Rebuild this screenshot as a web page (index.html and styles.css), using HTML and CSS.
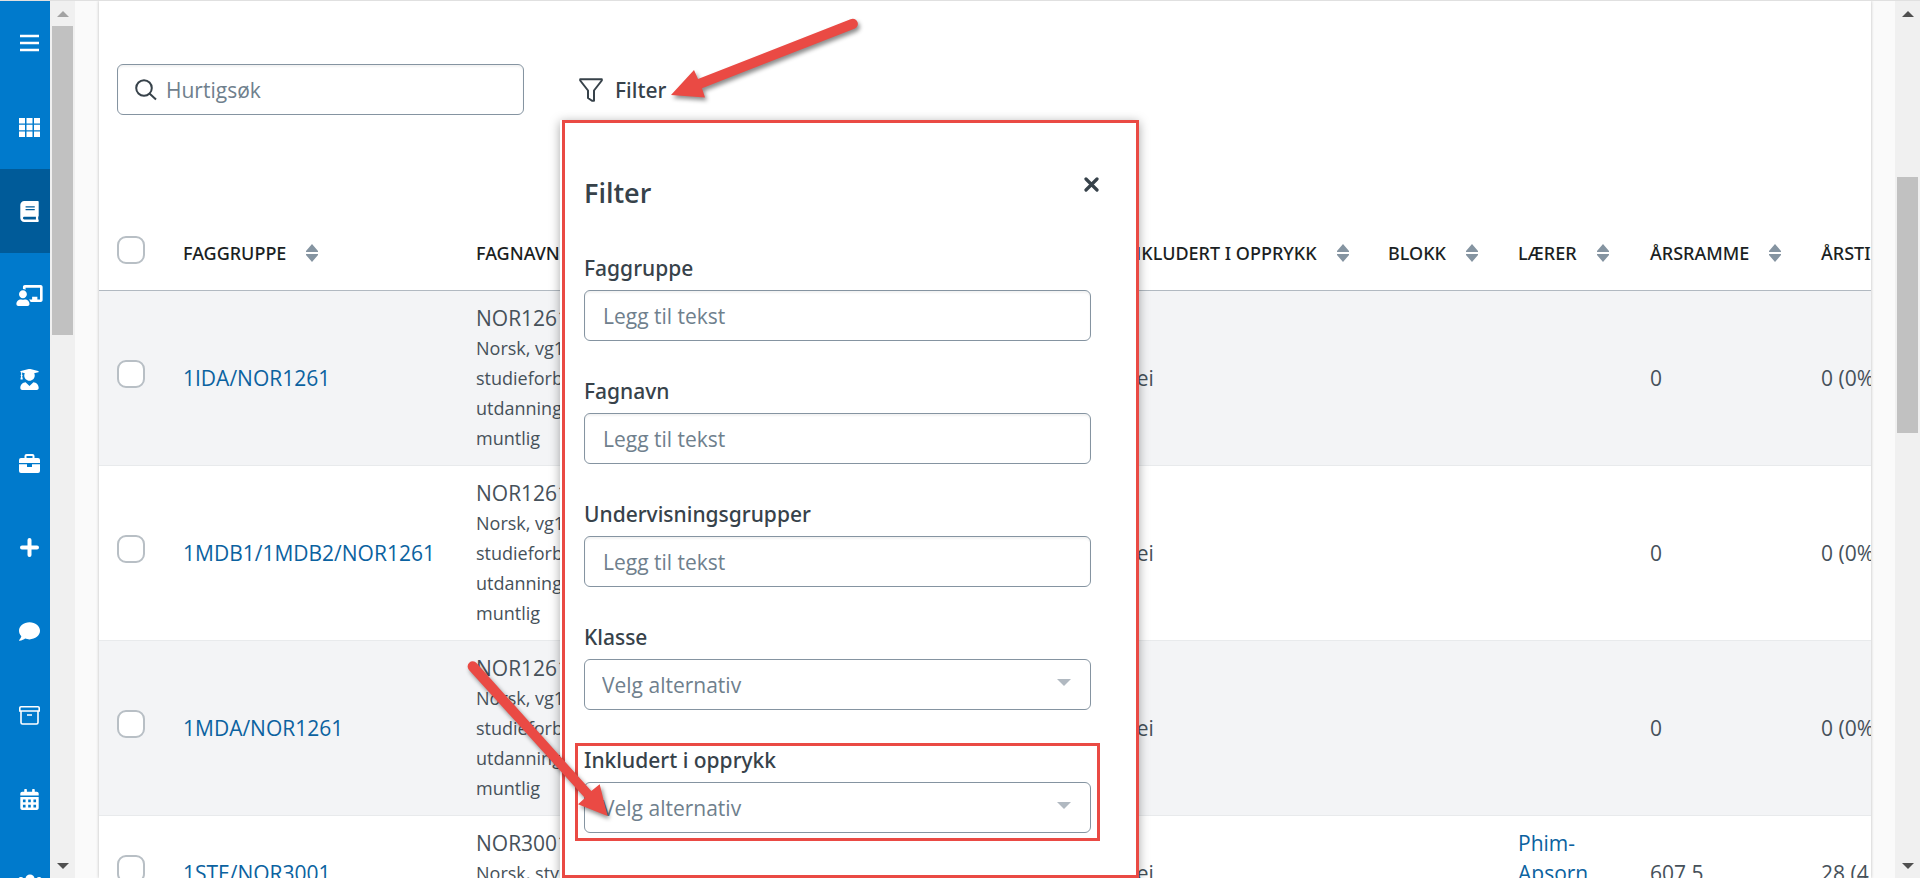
FILE: index.html
```html
<!DOCTYPE html>
<html lang="no">
<head>
<meta charset="utf-8">
<title>Faggrupper</title>
<link rel="stylesheet" href="styles.css">
</head>
<body>
<svg class="defs" aria-hidden="true">
  <symbol id="sort" viewBox="0 0 12 18"><path d="M6 0l6 7v1H0V7zM0 10h12v1l-6 7-6-7z" fill="#8594a1"/></symbol>
  <symbol id="up" viewBox="0 0 12 6"><path d="M6 0l6 6H0z" fill="currentColor"/></symbol>
  <symbol id="down" viewBox="0 0 12 6"><path d="M0 0h12L6 6z" fill="currentColor"/></symbol>
</svg>
<div class="page">
  <nav class="sidebar" aria-label="Hovedmeny">
    <a href="#" aria-label="Meny"><svg width="21" height="20" viewBox="0 0 21 20"><path d="M1 3h19M1 10h19M1 17h19" stroke="#fff" stroke-width="2.400"/></svg></a>
    <a href="#" aria-label="Oversikt"><svg width="21" height="19" viewBox="0 0 21 19"><path d="M0 0h6v5.500H0zM7.500 0h6v5.500h-6zM15 0h6v5.500h-6zM0 6.800h6v5.500H0zM7.500 6.800h6v5.500h-6zM15 6.800h6v5.500h-6zM0 13.500h6V19H0zM7.500 13.500h6V19h-6zM15 13.500h6V19h-6z"/></svg></a>
    <a href="#" class="active" aria-label="Fag"><svg width="19" height="21" viewBox="0 0 448 512"><path d="M448 360V24c0-13.300-10.700-24-24-24H96C43 0 0 43 0 96v320c0 53 43 96 96 96h328c13.300 0 24-10.700 24-24v-16c0-7.500-3.500-14.300-8.900-18.700-4.200-15.400-4.200-59.300 0-74.700 5.400-4.300 8.900-11.100 8.900-18.600zM128 134c0-3.300 2.700-6 6-6h212c3.300 0 6 2.700 6 6v20c0 3.300-2.700 6-6 6H134c-3.300 0-6-2.700-6-6v-20zm0 64c0-3.300 2.700-6 6-6h212c3.300 0 6 2.700 6 6v20c0 3.300-2.700 6-6 6H134c-3.300 0-6-2.700-6-6v-20zm253.400 250H96c-17.700 0-32-14.300-32-32 0-17.600 14.400-32 32-32h285.400c-1.900 17.100-1.900 46.900 0 64z"/></svg></a>
    <a href="#" aria-label="Undervisning"><svg width="27" height="21" viewBox="0 0 640 512"><path d="M208 352c-2.390 0-4.780.35-7.060 1.090C187.980 357.300 174.350 360 160 360c-14.350 0-27.980-2.700-40.950-6.910-2.280-.74-4.660-1.090-7.050-1.090C49.940 352-.33 402.480 0 464.620.14 490.880 21.730 512 48 512h224c26.270 0 47.860-21.120 48-47.380.33-62.140-49.940-112.620-112-112.620zm-48-32c53.020 0 96-42.980 96-96s-42.980-96-96-96-96 42.980-96 96 42.980 96 96 96zM592 0H208c-26.470 0-48 22.250-48 49.590V96c23.420 0 45.100 6.780 64 17.800V64h352v288h-64v-64H384v64h-76.240c19.100 16.690 33.120 38.730 39.690 64H592c26.470 0 48-22.250 48-49.590V49.590C640 22.250 618.470 0 592 0z"/></svg></a>
    <a href="#" aria-label="Elever"><svg width="19" height="21" viewBox="0 0 448 512"><path d="M319.400 320.600L224 416l-95.400-95.400C57.100 323.700 0 382.200 0 454.400v9.600c0 26.500 21.500 48 48 48h352c26.500 0 48-21.500 48-48v-9.600c0-72.200-57.100-130.700-128.600-133.800zM13.600 79.800l6.400 1.500v58.400c-7 4.200-12 11.500-12 20.300 0 8.400 4.600 15.400 11.100 19.700L3.500 242c-1.700 6.900 2.100 14 7.600 14h41.800c5.500 0 9.300-7.100 7.600-14l-15.600-62.300C51.400 175.400 56 168.400 56 160c0-8.800-5-16.100-12-20.300V87.100l66 15.900c-8.600 17.200-14 36.400-14 57 0 70.700 57.300 128 128 128s128-57.300 128-128c0-20.600-5.300-39.800-14-57l96.300-23.200c18.200-4.400 18.200-27.100 0-31.500l-190.400-46c-13-3.100-26.700-3.100-39.700 0L13.600 48.200c-18.100 4.400-18.100 27.200 0 31.600z"/></svg></a>
    <a href="#" aria-label="Ansatte"><svg width="21" height="19" viewBox="0 0 21 19"><path fill-rule="evenodd" d="M5.500 4V2a2 2 0 0 1 2-2h6a2 2 0 0 1 2 2v2H19a2 2 0 0 1 2 2v3H0V6a2 2 0 0 1 2-2zM7.500 4h6V2h-6zM0 10.300h8V13h5v-2.700h8V17a2 2 0 0 1-2 2H2a2 2 0 0 1-2-2z"/></svg></a>
    <a href="#" aria-label="Legg til"><svg width="19" height="19" viewBox="0 0 19 19"><path d="M9.500 2v15M2 9.500h15" stroke="#fff" stroke-width="4" stroke-linecap="round"/></svg></a>
    <a href="#" aria-label="Meldinger"><svg width="21" height="21" viewBox="0 0 512 512"><path d="M256 32C114.600 32 0 125.100 0 240c0 49.600 21.400 95 57 130.700C44.500 421.100 2.700 466 2.200 466.500c-2.200 2.300-2.800 5.700-1.500 8.700S4.800 480 8 480c66.300 0 116-31.800 140.600-51.400 32.700 12.300 69 19.400 107.400 19.400 141.400 0 256-93.100 256-208S397.400 32 256 32z"/></svg></a>
    <a href="#" aria-label="Arkiv"><svg width="21" height="19" viewBox="0 0 21 19"><path d="M2 .8h17a1.200 1.200 0 0 1 1.200 1.200v3H.8V2A1.200 1.200 0 0 1 2 .8zM2 5v11.500A1.500 1.500 0 0 0 3.500 18h14a1.500 1.500 0 0 0 1.500-1.500V5M8 9h5" fill="none" stroke="#fff" stroke-width="1.600"/></svg></a>
    <a href="#" aria-label="Kalender"><svg width="19" height="21" viewBox="0 0 448 512"><path fill-rule="evenodd" d="M0 464c0 26.500 21.500 48 48 48h352c26.500 0 48-21.500 48-48V192H0zM64 256h64v64H64zM192 256h64v64h-64zM320 256h64v64h-64zM64 384h64v64H64zM192 384h64v64h-64zM320 384h64v64h-64zM400 64h-48V16c0-8.800-7.200-16-16-16h-32c-8.800 0-16 7.200-16 16v48H160V16c0-8.800-7.200-16-16-16h-32c-8.800 0-16 7.200-16 16v48H48C21.500 64 0 85.500 0 112v48h448v-48c0-26.500-21.500-48-48-48z"/></svg></a>
    <a href="#" aria-label="Grupper"><svg width="26" height="21" viewBox="0 0 640 512"><path d="M96 224a64 64 0 1 0 0-128 64 64 0 0 0 0 128zm448 0a64 64 0 1 0 0-128 64 64 0 0 0 0 128zM320 256a112 112 0 1 0 0-224 112 112 0 0 0 0 224zM128 432c0-80 50-144 115-144h154c65 0 115 64 115 144v48H128z"/></svg></a>
  </nav>
  <div class="scrollbar side-scroll" aria-hidden="true">
    <svg class="faded" width="12" height="6"><use href="#up"/></svg><div class="track"><div class="thumb"></div></div><svg width="12" height="6"><use href="#down"/></svg>
  </div>

  <main class="content">
    <section class="card">
      <div class="toolbar">
        <label class="search">
          <svg width="22" height="22" viewBox="0 0 22 22" fill="none" stroke="#37424a" stroke-width="2"><circle cx="9" cy="9" r="7.800"/><path d="M14.500 14.500l6.500 6"/></svg>
          <input type="text" placeholder="Hurtigsøk" aria-label="Hurtigsøk">
        </label>
        <button class="filter-button" type="button">
          <svg width="24" height="24" viewBox="0 0 24 24" fill="none" stroke="#37424a" stroke-width="2" stroke-linejoin="round"><path d="M1.200 1.200h21.600v1.300L15 12.500v10.300h-2L9 20v-7.500L1.200 2.500z"/></svg>
          Filter
        </button>
      </div>

      <table class="groups">
        <colgroup><col class="c-check"><col class="c-group"><col class="c-name"><col class="c-rest"><col class="c-incl"><col class="c-block"><col class="c-teacher"><col class="c-frame"><col class="c-hours"></colgroup>
        <thead>
          <tr>
            <th class="check"><input type="checkbox" aria-label="Velg alle"></th>
            <th><span class="head">FAGGRUPPE <svg width="12" height="18"><use href="#sort"/></svg></span></th>
            <th><span class="head">FAGNAVN <svg width="12" height="18"><use href="#sort"/></svg></span></th>
            <th></th>
            <th><span class="head">INKLUDERT I OPPRYKK <svg width="12" height="18"><use href="#sort"/></svg></span></th>
            <th><span class="head">BLOKK <svg width="12" height="18"><use href="#sort"/></svg></span></th>
            <th><span class="head">LÆRER <svg width="12" height="18"><use href="#sort"/></svg></span></th>
            <th><span class="head">ÅRSRAMME <svg width="12" height="18"><use href="#sort"/></svg></span></th>
            <th><span class="head">ÅRSTIMER</span></th>
          </tr>
        </thead>
        <tbody>
          <tr>
            <td class="check"><input type="checkbox" aria-label="Velg 1IDA/NOR1261"></td>
            <td><a href="#">1IDA/NOR1261</a></td>
            <td>NOR1261<small>Norsk, vg1 studieforberedende utdanningsprogram, muntlig</small></td>
            <td></td><td>Nei</td><td></td><td></td><td>0</td><td>0 (0%)</td>
          </tr>
          <tr>
            <td class="check"><input type="checkbox" aria-label="Velg 1MDB1/1MDB2/NOR1261"></td>
            <td><a href="#">1MDB1/1MDB2/NOR1261</a></td>
            <td>NOR1261<small>Norsk, vg1 studieforberedende utdanningsprogram, muntlig</small></td>
            <td></td><td>Nei</td><td></td><td></td><td>0</td><td>0 (0%)</td>
          </tr>
          <tr>
            <td class="check"><input type="checkbox" aria-label="Velg 1MDA/NOR1261"></td>
            <td><a href="#">1MDA/NOR1261</a></td>
            <td>NOR1261<small>Norsk, vg1 studieforberedende utdanningsprogram, muntlig</small></td>
            <td></td><td>Nei</td><td></td><td></td><td>0</td><td>0 (0%)</td>
          </tr>
          <tr>
            <td class="check"><input type="checkbox" aria-label="Velg 1STE/NOR3001"></td>
            <td><a href="#">1STE/NOR3001</a></td>
            <td>NOR3001<small>Norsk, styrket opplæring</small></td>
            <td></td><td>Nei</td><td></td><td><a href="#">Phim-<br>Apsorn<br>Berg</a></td><td>607.5</td><td>28 (4.6%)</td>
          </tr>
        </tbody>
      </table>

      <form class="panel">
        <header class="panel-head">
          <h2>Filter</h2>
          <button class="close" type="button" aria-label="Lukk"><svg width="15" height="15" viewBox="0 0 15 15"><path d="M2 2l11 11M13 2L2 13" stroke="#37424a" stroke-width="3.200" stroke-linecap="round"/></svg></button>
        </header>
        <div class="field"><label for="f1">Faggruppe</label><input id="f1" type="text" placeholder="Legg til tekst"></div>
        <div class="field"><label for="f2">Fagnavn</label><input id="f2" type="text" placeholder="Legg til tekst"></div>
        <div class="field"><label for="f3">Undervisningsgrupper</label><input id="f3" type="text" placeholder="Legg til tekst"></div>
        <div class="field"><label for="f4">Klasse</label><div class="select"><select id="f4"><option>Velg alternativ</option></select></div></div>
        <div class="field marked"><label for="f5">Inkludert i opprykk</label><div class="select"><select id="f5"><option>Velg alternativ</option></select></div></div>
      </form>
    </section>
  </main>
  <div class="scrollbar page-scroll" aria-hidden="true">
    <svg width="12" height="6"><use href="#up"/></svg><div class="track"><div class="thumb"></div></div><svg width="12" height="6"><use href="#down"/></svg>
  </div>
  <svg class="arrows" width="900" height="878" viewBox="0 0 900 878" aria-hidden="true">
    <path d="M671 95L694 70L698 79L850.500 19.300A5 5 0 0 1 855 28.500L702 88.300L705 97.500z"/>
    <path d="M607.500 816L578 804.300L585 798L469 670A5 5 0 0 1 476.500 663L591.300 791L599.700 784.300z"/>
  </svg>
</div>
</body>
</html>
```

FILE: styles.css
```css
* { box-sizing: border-box; }

body {
  margin: 0;
  font-family: "Open Sans", "Noto Sans", sans-serif;
  font-size: 21px;
  line-height: 30px;
  color: #46515a;
  overflow: hidden;
}

input, select, button { font: inherit; color: inherit; }

.defs { position: absolute; width: 0; height: 0; }

.page {
  position: relative;
  display: flex;
  height: 100vh;
  overflow: hidden;
  border-top: 1px solid #e0e0e0;
  background: #fafafa;
}

/* Sidebar */
.sidebar { flex: none; width: 50px; background: #007acc; overflow: hidden; }
.sidebar a {
  display: flex;
  align-items: center;
  justify-content: center;
  height: 84px;
  padding-left: 9px;
}
.sidebar a.active { background: #005b99; }
.sidebar svg { flex: none; fill: #fff; }

/* Scrollbars */
.scrollbar {
  flex: none;
  display: flex;
  flex-direction: column;
  align-items: center;
  gap: 9px;
  width: 25px;
  padding: 10px 0 9px;
  background: #f0f0f0;
  color: #505050;
}
.scrollbar .faded { color: #a3a3a3; }
.track { flex: 1; width: 21px; }
.thumb { background: #c1c1c1; }
.side-scroll .thumb { height: 309px; }
.page-scroll .thumb { height: 256px; margin-top: 151px; }

/* Main card */
.content { flex: 1; min-width: 0; padding: 0 24px; }
.card {
  position: relative;
  height: 100%;
  overflow: hidden;
  background: #fff;
  box-shadow: 0 0 3px rgba(0, 0, 0, .25);
}
.toolbar { display: flex; align-items: center; gap: 55px; padding: 63px 18px 0; }
.search {
  display: flex;
  align-items: center;
  gap: 9px;
  width: 407px;
  height: 51px;
  padding: 0 17px;
  border: 1px solid #8594a1;
  border-radius: 6px;
  box-shadow: inset 0 2px 2px rgba(0, 0, 0, .05);
}
.search input { flex: 1; min-width: 0; padding: 0; border: 0; outline: 0; background: none; }
::placeholder { color: #6f808d; opacity: 1; }
.filter-button {
  display: flex;
  align-items: center;
  gap: 12px;
  padding: 0;
  border: 0;
  background: none;
  color: #37424a;
  font-family: "Noto Sans", sans-serif;
  font-weight: 500;
}

/* Table */
.groups { width: 1903px; margin-top: 99px; table-layout: fixed; border-collapse: separate; border-spacing: 0; }
.c-check { width: 65px; }
.c-group { width: 293px; }
.c-name { width: 220px; }
.c-rest { width: 425px; }
.c-incl { width: 267px; }
.c-block { width: 130px; }
.c-teacher { width: 132px; }
.c-frame { width: 171px; }
.c-hours { width: 200px; }
th {
  height: 77px;
  padding: 2px 0 0 19px;
  border-bottom: 1px solid #b1b9c1;
  text-align: left;
  font-family: "Noto Sans", sans-serif;
  font-size: 18px;
  font-weight: 500;
  color: #1b1f23;
}
.head { display: flex; align-items: center; gap: 20px; white-space: nowrap; }
td { padding: 12px 19px; border-bottom: 1px solid #e8eaec; vertical-align: middle; }
td:nth-child(2) { padding-right: 0; }
tbody tr:nth-child(odd) { background: #f3f4f6; }
td small { display: block; font-size: 18px; }
td a { color: #0b62a0; text-decoration: none; }
.check { padding: 0 0 8px 18px; }
th.check { padding-bottom: 4px; }
.check input {
  appearance: none;
  display: block;
  width: 28px;
  height: 28px;
  margin: 0;
  border: 2px solid #b8bfc5;
  border-radius: 9px;
  background: #fff;
}

/* Filter panel */
.panel {
  position: absolute;
  top: 119px;
  bottom: 0;
  left: 461px;
  width: 579px;
  padding: 51px 48px 0 24px;
  background: #fff;
  box-shadow: 0 2px 10px rgba(0, 0, 0, .35);
}
.panel::before {
  content: "";
  position: absolute;
  inset: 0 0 0 2px;
  border: 3px solid #ea4a44;
  pointer-events: none;
}
.panel-head { display: flex; justify-content: space-between; align-items: flex-start; margin-bottom: 44px; }
.panel-head h2 { margin: 6px 0 0; font-size: 27px; line-height: 32px; font-weight: 600; color: #37424a; }
.close { display: flex; margin-right: -8px; padding: 6px 0; border: 0; background: none; }
.field { position: relative; display: flex; flex-direction: column; gap: 7px; margin-bottom: 35px; }
.field label { font-family: "Noto Sans", sans-serif; font-weight: 500; color: #37424a; }
.field input, .field select {
  width: 100%;
  height: 51px;
  padding: 0 18px;
  border: 1px solid #8594a1;
  border-radius: 6px;
  background: #fff;
}
.field input { box-shadow: inset 0 2px 2px rgba(0, 0, 0, .05); }
.select { position: relative; height: 51px; }
.select select { appearance: none; padding: 0 17px; color: #6f808d; }
.select::after {
  content: "";
  position: absolute;
  top: 20px;
  right: 20px;
  border: 7px solid transparent;
  border-top-color: #b1b9c1;
  border-bottom: 0;
}
.marked::after {
  content: "";
  position: absolute;
  inset: -2px -9px -8px;
  border: 3px solid #ea4a44;
  pointer-events: none;
}

.arrows { position: absolute; top: -1px; left: 0; pointer-events: none; fill: #ea4a44; filter: drop-shadow(2px 3px 2px rgba(0, 0, 0, .45)); }
```
